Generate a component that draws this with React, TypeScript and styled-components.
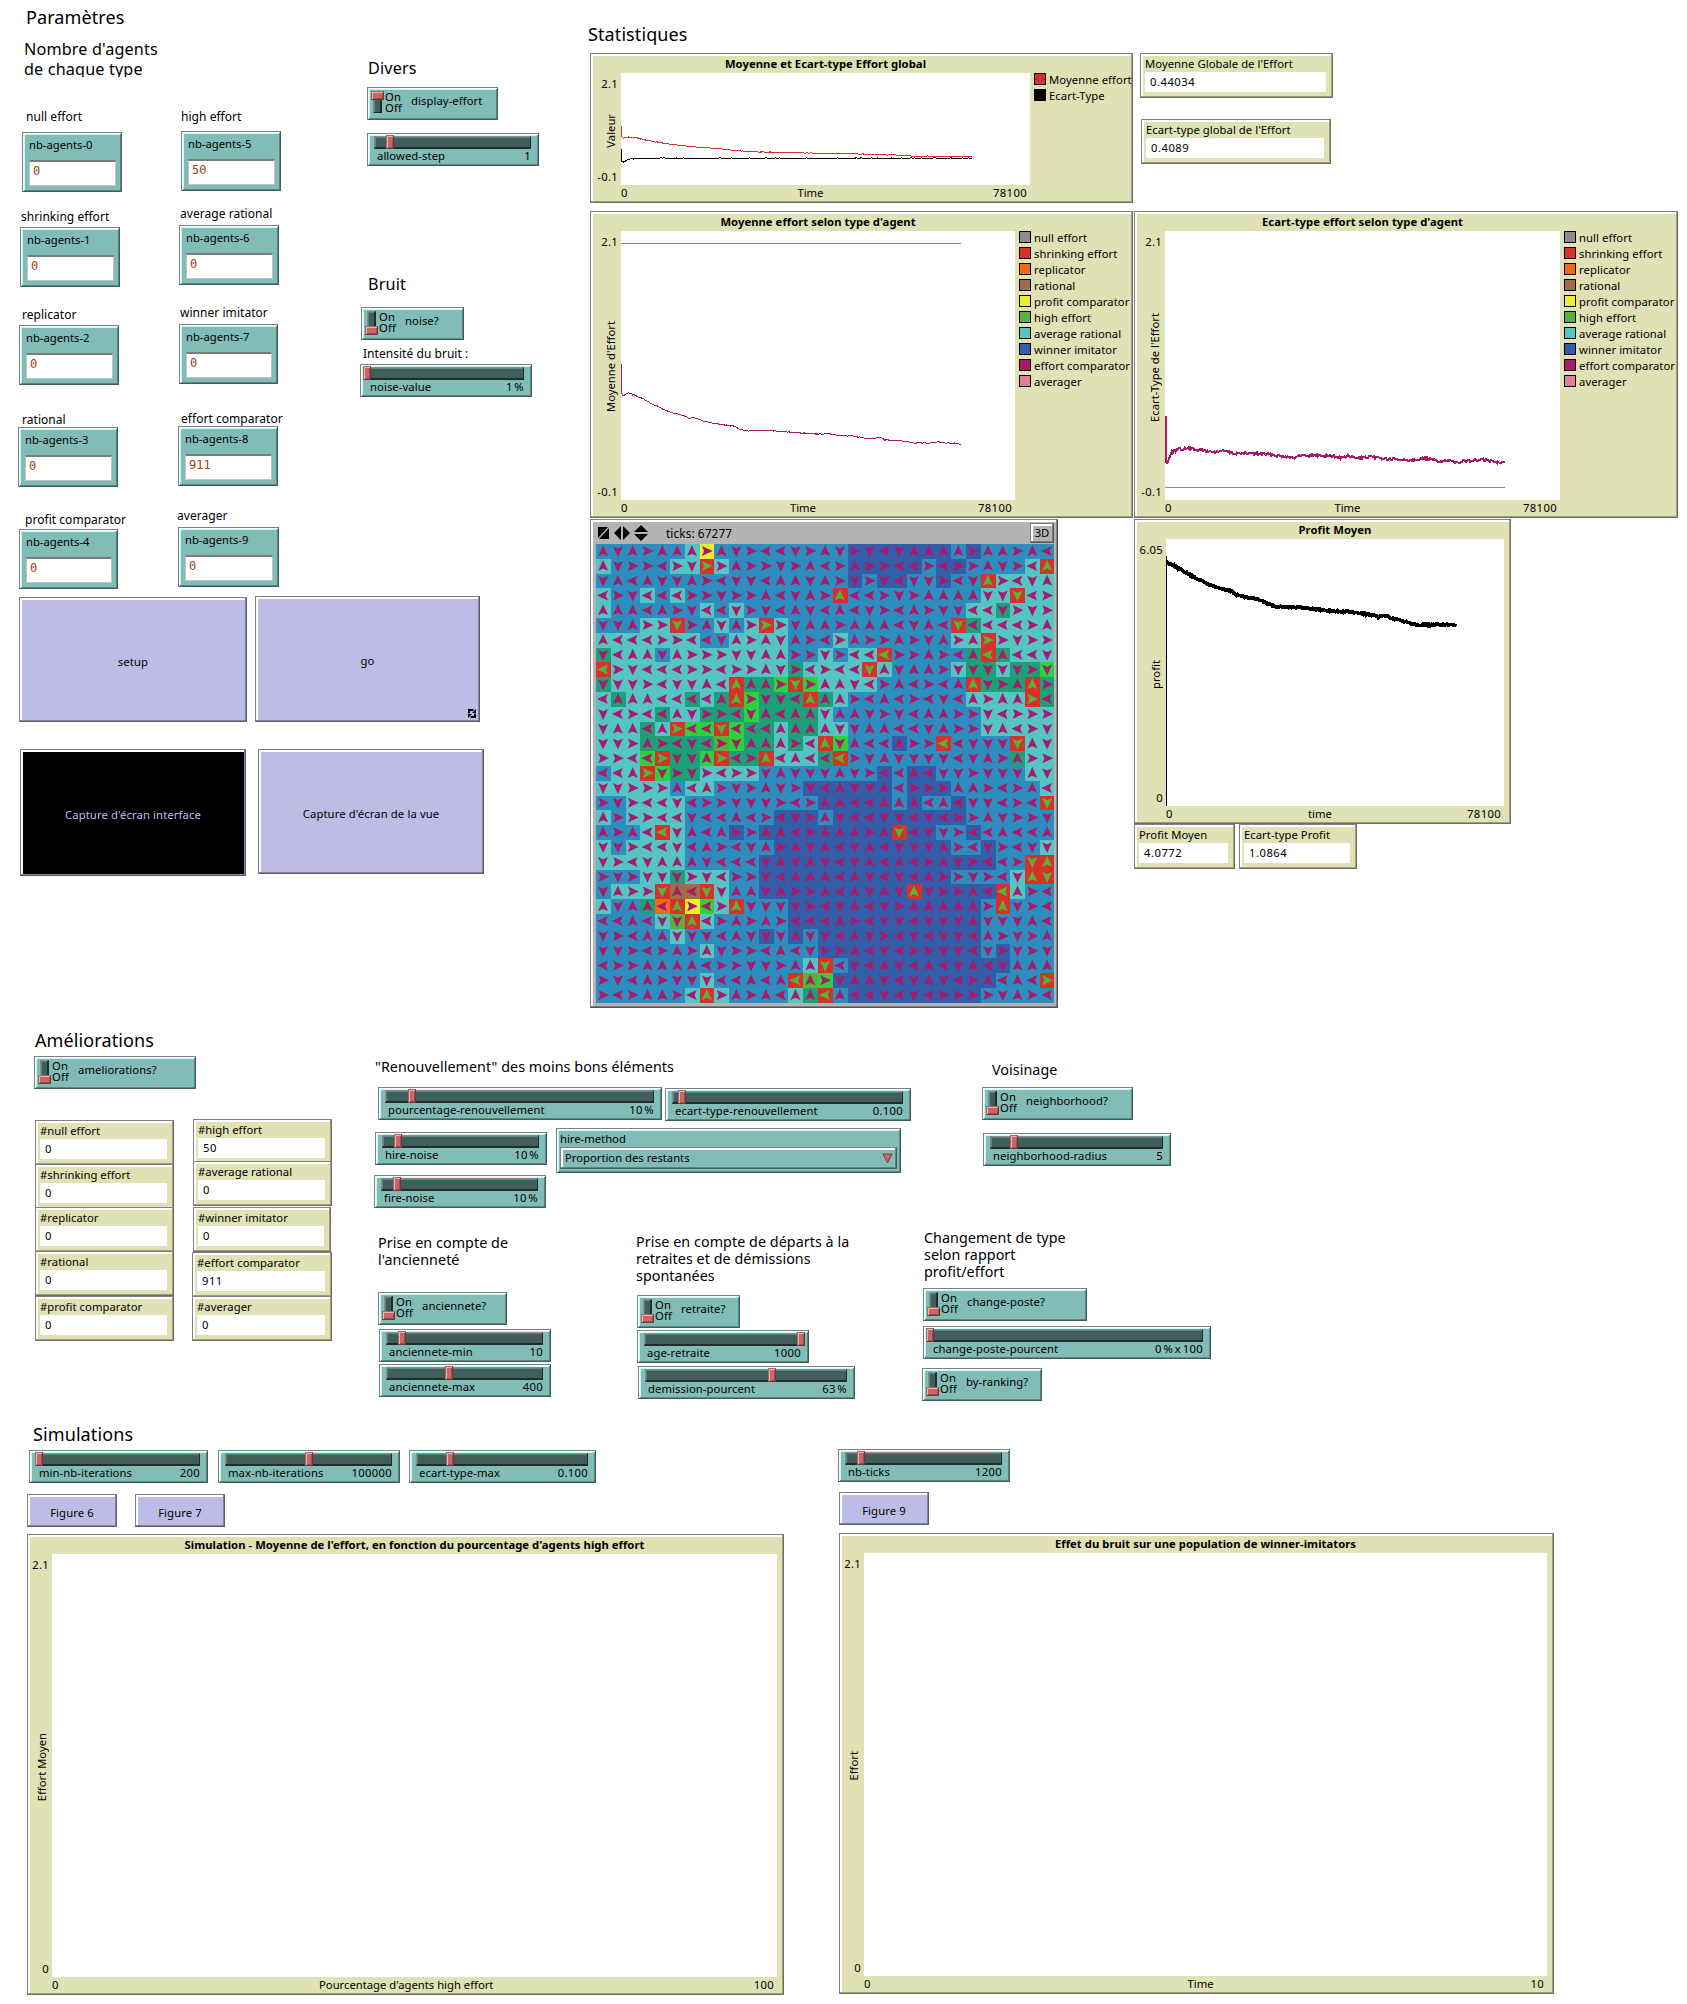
import React from 'react';
import styled, { createGlobalStyle, css } from 'styled-components';

const GlobalStyle = createGlobalStyle`
  * { box-sizing: border-box; }
  html, body { margin: 0; padding: 0; background: #fff; }
  body {
    font-family: "Noto Sans", "Open Sans", "Liberation Sans", sans-serif;
    font-size: 11.25px;
    line-height: 14px;
    color: #000;
  }
`;

/* ---------- palette ---------- */

const teal = '#82bcb6';
const tan = '#e0e1b5';
const lavender = '#bcbce6';

const agentTypes: [string, string][] = [
  ['null effort', '#8d8d8d'],
  ['shrinking effort', '#d73229'],
  ['replicator', '#f16a15'],
  ['rational', '#9d6e48'],
  ['profit comparator', '#eded31'],
  ['high effort', '#59b03c'],
  ['average rational', '#54c4c4'],
  ['winner imitator', '#345da9'],
  ['effort comparator', '#a71b6a'],
  ['averager', '#e07f96'],
];

/* ---------- layout ---------- */

const Page = styled.main`
  display: flex;
  flex-direction: column;
  width: 1687px;
  height: 2004px;
  overflow: hidden;
`;

const Section = styled.section`
  display: flex;
  align-items: flex-start;
`;

type Space = { $mt?: number; $ml?: number; $w?: number };
const space = css<Space>`
  margin-top: ${p => p.$mt ?? 0}px;
  margin-left: ${p => p.$ml ?? 0}px;
`;

const Column = styled.div<Space>`
  display: flex;
  flex-direction: column;
  align-items: flex-start;
  flex: none;
  width: ${p => (p.$w ? `${p.$w}px` : 'auto')};
  ${space}
`;

const Row = styled.div<Space & { $gap?: number }>`
  display: flex;
  align-items: flex-start;
  gap: ${p => p.$gap ?? 0}px;
  ${space}
`;

/* ---------- notes ---------- */

const Title = styled.h1<Space>`
  ${space}
  margin-bottom: 0;
  font-size: 18px;
  font-weight: 400;
  line-height: 24px;
  letter-spacing: 0.1px;
  white-space: nowrap;
`;

const Heading = styled.h2<Space & { $h?: number }>`
  ${space}
  margin-bottom: 0;
  height: ${p => p.$h ?? 20}px;
  overflow: hidden;
  font-size: 16.2px;
  font-weight: 400;
  line-height: 20px;
  letter-spacing: 0.15px;
  white-space: pre;
`;

const SubHeading = styled.h3<Space>`
  ${space}
  margin-bottom: 0;
  font-size: 14.3px;
  font-weight: 400;
  line-height: 17px;
  letter-spacing: 0.06px;
  white-space: pre;
`;

const Note = styled.p<Space>`
  ${space}
  margin-bottom: 0;
  padding-top: 1px;
  height: 16px;
  font-size: 12px;
  line-height: 16px;
  letter-spacing: 0.04px;
  white-space: nowrap;
`;

/* ---------- widget frames ---------- */

const Frame = styled.div<Space & { $h: number }>`
  ${space}
  flex: none;
  width: ${p => p.$w}px;
  height: ${p => p.$h}px;
  white-space: nowrap;
  border: 1px solid #808080;
`;

const TealFrame = styled(Frame)`
  background: ${teal};
  border-right-color: #415e5b;
  border-bottom-color: #415e5b;
  box-shadow: inset 1px 1px 0 #fff, inset -1px -1px 0 #5b847f, inset 2px 2px 0 #b9fffb;
`;

const TanFrame = styled(Frame)`
  background: ${tan};
  border-right-color: #70705a;
  border-bottom-color: #70705a;
  box-shadow: inset -1px -1px 0 #9d9e7f, inset 2px 2px 0 #fff;
`;

/* ---------- buttons ---------- */

const ButtonBox = styled.button<Space & { $h: number; $active?: boolean }>`
  ${space}
  position: relative;
  flex: none;
  display: flex;
  align-items: center;
  justify-content: center;
  width: ${p => p.$w}px;
  height: ${p => p.$h}px;
  padding: 4px 0 0;
  font: inherit;
  letter-spacing: 0.12px;
  color: ${p => (p.$active ? lavender : '#000')};
  background: ${p => (p.$active ? '#000' : lavender)};
  border: 1px solid #808080;
  border-right-color: #5e5e73;
  border-bottom-color: #5e5e73;
  box-shadow: inset -1px -1px 0 #8383a1, inset 2px 2px 0 #fff;
`;

const ForeverIcon = styled.svg`
  position: absolute;
  right: 3px;
  bottom: 3px;
`;

/* ---------- input ---------- */

const InputFrame = styled(TealFrame)`
  display: flex;
  flex-direction: column;
  padding: 5px 5px 5px 6px;
`;

const InputValue = styled.div`
  height: 26px;
  margin-top: 8px;
  padding: 2px 3px;
  font-family: "DejaVu Sans Mono", "Liberation Mono", monospace;
  font-size: 12px;
  line-height: 14px;
  color: #a0400f;
  background: #fff;
  border: 1px solid #c4c4c4;
  border-top: 2px solid #7b7b7b;
`;

function Input({ name, value, ...rest }: { name: string; value: string } & Space) {
  return (
    <InputFrame $w={100} $h={60} {...rest}>
      <span>{name}</span>
      <InputValue>{value}</InputValue>
    </InputFrame>
  );
}

/* ---------- switch ---------- */

const SwitchFrame = styled(TealFrame)`
  display: flex;
  padding: 3px 0 0 5px;
`;

const Slot = styled.div<{ $on?: boolean }>`
  display: flex;
  flex-direction: column;
  justify-content: ${p => (p.$on ? 'flex-start' : 'flex-end')};
  width: 9px;
  height: 22px;
  background: #425e5a;
  border: 1px solid #8b8b8b;
  border-right: 2px solid #1f2d2b;
  border-bottom: 1px solid #1f2d2b;
  box-shadow: inset 1px 1px 0 #5b847f;
`;

const SlotKnob = styled.div<{ $on?: boolean }>`
  width: 13px;
  height: 9px;
  flex: none;
  margin: ${p => (p.$on ? '-1px 0 0 -3px' : '0 0 -3px -3px')};
  background: #cc6566;
  border: 1px solid #8d7272;
  border-right-color: #713738;
  border-bottom-color: #713738;
  box-shadow: inset 1px 1px 0 #ffa9a9, inset -1px -1px 0 #9c4d4e;
`;

const OnOff = styled.div`
  display: flex;
  flex-direction: column;
  width: 26px;
  margin-left: 3px;
  line-height: 11px;
  letter-spacing: 0.15px;
`;

const SwitchName = styled.span`
  margin-top: 3px;
  letter-spacing: 0.08px;
`;

function Switch({ name, on, w, ...rest }: { name: string; on?: boolean; w: number } & Space) {
  return (
    <SwitchFrame $w={w} $h={33} {...rest}>
      <Slot $on={on}>
        <SlotKnob $on={on} />
      </Slot>
      <OnOff>
        <span>On</span>
        <span>Off</span>
      </OnOff>
      <SwitchName>{name}</SwitchName>
    </SwitchFrame>
  );
}

/* ---------- slider ---------- */

const SliderFrame = styled(TealFrame)`
  padding: 2px 7px 0 6px;
`;

const Track = styled.div`
  position: relative;
  height: 13px;
  background: #425e5a;
  border: 1px solid #8b8b8b;
  border-right-color: #1f2d2b;
  border-bottom: 2px solid #1f2d2b;
  box-shadow: inset 1px 1px 0 #5b847f;
`;

const TrackKnob = styled.div`
  position: absolute;
  top: -2px;
  width: 8px;
  height: 14px;
  background: #cc6566;
  border: 1px solid #8d7272;
  border-right-color: #713738;
  border-bottom-color: #713738;
  box-shadow: inset 1px 1px 0 #ffa9a9, inset -1px -1px 0 #9c4d4e;
`;

const SliderText = styled.div`
  display: flex;
  justify-content: space-between;
  padding-left: 3px;
  letter-spacing: 0.08px;
`;

const SliderValue = styled.span`
  letter-spacing: 0.3px;
  word-spacing: -1.5px;
`;

function Slider({
  name,
  value,
  at,
  w = 172,
  ...rest
}: { name: string; value: string; at: number; w?: number } & Space) {
  return (
    <SliderFrame $w={w} $h={33} {...rest}>
      <Track>
        <TrackKnob style={{ left: `calc((100% + 2px) * ${at} - 5px)` }} />
      </Track>
      <SliderText>
        <span>{name}</span>
        <SliderValue>{value}</SliderValue>
      </SliderText>
    </SliderFrame>
  );
}

/* ---------- monitor ---------- */

const MonitorFrame = styled(TanFrame)`
  display: flex;
  flex-direction: column;
  padding: 3px 6px 5px 4px;
  letter-spacing: 0.05px;
`;

const MonitorValue = styled.div`
  height: 20px;
  margin-top: 1px;
  padding-left: 5px;
  line-height: 20px;
  letter-spacing: 0.5px;
  background: #fff;
`;

function Monitor({ name, value, w, ...rest }: { name: string; value: string; w: number } & Space) {
  return (
    <MonitorFrame $w={w} $h={45} {...rest}>
      <span>{name}</span>
      <MonitorValue>{value}</MonitorValue>
    </MonitorFrame>
  );
}

/* ---------- chooser ---------- */

const ChooserFrame = styled(TealFrame)`
  padding: 3px 3px 0;
`;

const ChooserValue = styled.div`
  display: flex;
  align-items: center;
  justify-content: space-between;
  height: 22px;
  margin-top: 1px;
  padding: 0 3px 0 4px;
  border: 1px solid #808080;
  border-right-color: #415e5b;
  border-bottom-color: #415e5b;
  box-shadow: inset -1px -1px 0 #5b847f, inset 2px 2px 0 #fff;
`;

/* ---------- plot ---------- */

const PlotFrame = styled(TanFrame)<{ $left: number; $right: number }>`
  display: grid;
  grid-template-columns: ${p => p.$left}px 1fr ${p => p.$right}px;
  grid-template-rows: 19px 1fr 17px;
`;

const PlotTitle = styled.div`
  grid-column: 2;
  grid-row: 1;
  display: flex;
  justify-content: center;
  padding-top: 3px;
  font-weight: 700;
  letter-spacing: 0.05px;
`;

const YAxis = styled.div`
  grid-column: 1;
  grid-row: 2;
  display: flex;
  flex-direction: column;
  align-items: flex-end;
  justify-content: space-between;
  padding: 4px 3px 1px 0;
  letter-spacing: 0.3px;
`;

const YLabel = styled.span`
  writing-mode: vertical-rl;
  transform: rotate(180deg);
  width: 14px;
  letter-spacing: 0;
`;

const Canvas = styled.svg`
  grid-column: 2;
  grid-row: 2;
  display: block;
  width: 100%;
  height: 100%;
  background: #fff;
`;

const XAxis = styled.div`
  grid-column: 2;
  grid-row: 3;
  display: flex;
  justify-content: space-between;
  padding: 0 3px 0 0;
  line-height: 16px;
`;

const AxisBound = styled.span`
  letter-spacing: 0.35px;
`;

const Legend = styled.ul`
  grid-column: 3;
  grid-row: 2;
  margin: 0;
  padding: 0 0 0 4px;
  list-style: none;
  min-width: 0;
  letter-spacing: 0.08px;
`;

const LegendItem = styled.li`
  display: flex;
  height: 16px;
  gap: 3px;
`;

const Swatch = styled.span<{ $color: string }>`
  flex: none;
  width: 12px;
  height: 12px;
  background: ${p => p.$color};
  border: 1px solid #000;
`;

type PlotProps = {
  w: number;
  h: number;
  left?: number;
  right?: number;
  title: string;
  y: [string, string, string];
  x: [string, string, string];
  legend?: [string, string][];
  children?: React.ReactNode;
} & Space;

function Plot({ w, h, left = 30, right = 6, title, y, x, legend, children, ...rest }: PlotProps) {
  return (
    <PlotFrame $w={w} $h={h} $left={left} $right={right} {...rest}>
      <PlotTitle>{title}</PlotTitle>
      <YAxis>
        <span>{y[0]}</span>
        <YLabel>{y[1]}</YLabel>
        <span>{y[2]}</span>
      </YAxis>
      <Canvas>{children}</Canvas>
      <XAxis>
        <AxisBound>{x[0]}</AxisBound>
        <span>{x[1]}</span>
        <AxisBound>{x[2]}</AxisBound>
      </XAxis>
      {legend && (
        <Legend>
          {legend.map(([name, color]) => (
            <LegendItem key={name}>
              <Swatch $color={color} />
              <span>{name}</span>
            </LegendItem>
          ))}
        </Legend>
      )}
    </PlotFrame>
  );
}

/* Builds a jittered pen trace through the given points, one sample per pixel. */
function trace(points: [number, number][], jitter: number, seed = 7): string {
  let s = seed;
  const next = () => {
    s = (s * 1103515245 + 12345) % 2147483648;
    return s / 2147483648 - 0.5;
  };
  const out: string[] = [];
  for (let i = 0; i < points.length - 1; i++) {
    const [x0, y0] = points[i];
    const [x1, y1] = points[i + 1];
    const n = Math.max(1, Math.round(x1 - x0));
    for (let k = 0; k < n; k++) {
      const t = k / n;
      out.push(`${(x0 + (x1 - x0) * t).toFixed(1)},${(y0 + (y1 - y0) * t + next() * jitter).toFixed(1)}`);
    }
  }
  const last = points[points.length - 1];
  out.push(`${last[0]},${last[1]}`);
  return out.join(' ');
}

const Pen = styled.polyline<{ $color: string; $width?: number }>`
  fill: none;
  stroke: ${p => p.$color};
  stroke-width: ${p => p.$width ?? 1}px;
  shape-rendering: crispEdges;
`;

const globalMean: [number, number][] = [
  [0.5, 53], [0.6, 64], [2, 65], [7, 64], [16, 65], [27, 67.5], [38, 69.5], [52, 71.5], [66, 73.2], [84, 74.8],
  [102, 76.2], [116, 77.3], [134, 79], [173, 79.3], [191, 80.2], [230, 80.6], [255, 81.6], [273, 82], [291, 83.2], [351, 83.5],
];
const globalDeviation: [number, number][] = [
  [0.5, 75.4], [0.6, 88], [2, 89.5], [5, 87.5], [9, 86], [23, 85.3], [351, 85.3],
];
const meanByType: [number, number][] = [
  [0.5, 133], [0.6, 162], [2, 164.7], [7, 161.7], [12.5, 163.7], [18, 166.3], [23, 168.3], [30, 172.3], [37.5, 175.7],
  [43, 178.7], [52, 182], [61, 184.3], [68, 187], [73, 186.3], [79, 189], [87.5, 191.3], [96, 193], [105, 194],
  [114, 195.3], [118, 197.7], [125, 199.7], [137, 199.3], [155, 200], [173, 201.3], [187, 202.7], [200, 203.3],
  [207, 202.7], [214, 204], [230, 205], [248, 207.3], [261, 206.7], [264, 209], [280, 210], [291, 211.7],
  [309, 212], [318, 211], [327, 212.3], [334, 212], [340, 213.3],
];
const deviationByType: [number, number][] = [
  [0.5, 185], [0.6, 229], [1.5, 231.7], [3.3, 229], [5.8, 222.3], [9.4, 219.7], [14.8, 218.3], [24, 217.3], [35, 219],
  [49, 221], [60, 219.7], [67, 222.3], [82, 222.3], [100, 223], [114, 224.7], [130.5, 226.7], [136, 224.3],
  [165, 224.7], [177.5, 227], [183, 225], [190, 227], [208, 226.3], [223, 228], [244, 229], [261, 227.3],
  [270, 229.7], [291, 230.7], [313, 229.3], [320, 228.7], [331, 231.3], [340, 230.7],
];
const profitMean: [number, number][] = [
  [0.5, 23.3], [4, 24.7], [9, 27], [14, 30.3], [20.7, 34], [27.3, 37.7], [34, 41], [40.7, 44.3], [49, 47.7], [59, 51],
  [65.7, 52.3], [70.7, 55.7], [79, 58.3], [89, 59.7], [97.3, 62.3], [102.3, 65], [110.7, 67.7], [127.3, 68],
  [140.7, 69.3], [154, 70.7], [167.3, 72.3], [184, 73], [200.7, 75.3], [212.3, 78], [219, 76.3], [225.7, 79.7],
  [237.3, 82], [249, 85.3], [264, 86.3], [274, 85.3], [284, 86], [290.5, 86.7],
];

/* ---------- world view ---------- */

const ViewFrame = styled(Frame)`
  display: flex;
  flex-direction: column;
  padding: 2px 3px 4px 5px;
  background: #b4b4b4;
  border-right-color: #555;
  border-bottom-color: #555;
  box-shadow: inset -1px -1px 0 #7d7d7d, inset 2px 2px 0 #fff;
`;

const ViewBar = styled.div`
  display: flex;
  flex: none;
  align-items: center;
  height: 22px;
  padding-left: 2px;
  gap: 4px;
`;

const Ticks = styled.span`
  margin-left: 14px;
  font-size: 11.8px;
  letter-spacing: 0.1px;
`;

const ViewButton = styled.button`
  width: 24px;
  height: 20px;
  margin-left: auto;
  padding: 0;
  font: inherit;
  color: #000;
  background: #b4b4b4;
  border: 1px solid #808080;
  border-right-color: #555;
  border-bottom-color: #555;
  box-shadow: inset -1px -1px 0 #7d7d7d, inset 2px 2px 0 #fff;
`;

const World = styled.svg`
  display: block;
  flex: none;
`;

const patchColors: Record<string, string> = {
  B: '#2d8dbe',
  D: '#345da9',
  C: '#54c4c4',
  T: '#1d9f78',
  R: '#d73229',
  L: '#2cd13b',
  G: '#59b03c',
  Y: '#eded31',
  O: '#f16a15',
  N: '#9d6e48',
};

const patches = [
  'BBBBBBCYBBBBBBBBBDDDDDDDBDBBBBB',
  'CBBBBCCRCBBBBBBBBDDDDDBDDBBBBCR',
  'BBBBBBBBBBBBBBBBBDBDDBBDBBRCCCC',
  'CBBCBCBBBBBBBBBBRBBBBBBBBBCCRCC',
  'CBBBBBBCBCBBBBBBBBBBBBBBBCCTCCC',
  'BBBCCRBBCBCRCBBBBBBBBBBBRTCCCCC',
  'CCCCCCCBBCCCCBBBCBBBBBBBCCRCCCC',
  'TCCCBCCCCCCCCBBCBCCRBBBBBTRTCCC',
  'RCCCCCCCCCCCCTCCCCRCBBBBCTTCTTL',
  'TCCCCCCCCRTTLRLCCCCBBBBBBRTTTRT',
  'CTCCCCTCTRLTTTRTCBBBBBBBBCCCCRT',
  'CCCCTCCTTTLTTTTCBBBBBBBBBBCCCCC',
  'CCCTCRLLRLTTCTTCCBBBBBBBBBCCCCC',
  'CCCTTTTTGLTTCTCRLBBBDBBRBBBBRCC',
  'CCCLRTTLRTTRCCCTRBBBBBBBBBBBTCC',
  'BCCRLTTCCCCBBBBBBBBDBDDBBBBBBCC',
  'CCCCCBCCBBBBBBDDDDDDBDDDBBBBBBC',
  'BBCCCCBBBBBBBBBDDDDDBDBBDBBBBBR',
  'CBCCCCBBBBBBDDDBDDDDDDDDDBBBBBB',
  'BBBCRCBBBDBDDDDDDDDDRDDBBDBBBBB',
  'CBCCCCBBBBBBDDDDDDDDDDDDBBDBBBC',
  'CCCCCCBBBBBDDDDDDDDDDDDDDDDBBRR',
  'BBBCCTCCCBBDDDDDDDDDDDDDBBBBCRR',
  'BCCCRNNRCBBDDDDDDDDDDRDDDDDRCBB',
  'CBBTORYLCRBBBDDDDDDDDDDDDDBRBBB',
  'BBBBCGRCBBBBBDDDDDDDDDDDDDBBBBB',
  'BBBBBCBBBBBDBDBDDDDDDDDDDDBBBBB',
  'BBBBBBBCBBBBBBBDDDDDDDDDDDBDBBB',
  'BBBBBBBBBBBBBBCRBDDDDDDDDDDDBBB',
  'BBBBBBBCBBBBBRGLDDDDDDDDDDDBBBR',
  'BBBBBBCRCBBBBCTRBDDDDDDDDDBBBBB',
];

const headings = [
  'UDURUUURUDRLLDRUDRDLDUUUURUURUL',
  'UDRRLRDRRURRDRULRURRLLRLRRUDRLU',
  'DULUDDURLDDLUUDURDRDLDDRLDURLDU',
  'LRDLLLRRDRRULDURULLRDRUUUUDDDLR',
  'UUULURDLLDRDLUDLULDRLURDDLLDRDR',
  'DDURRDRUDURRRDUURUUULDULDLLLLRU',
  'ULLLRRLLDURUDURLRURRURDURURRDRR',
  'DLUUDURRRDDUURRDRLLLRRURLULULLD',
  'LRDLLLRRLRRUDRLRLLDUDUURDDDDDRD',
  'DDDRLDDULUUURDRUUDLRULRLUUDRUUR',
  'LUUULLLLUURDDLUUURLULRLDLURUURL',
  'DLRLLUDRRLDULUUDUUDRDLUURRDLRRR',
  'DUULURLLDLLLUUUUDDUULLDURRDULRD',
  'DDRURLDLRDUUURLUDULLURRLLDDDDUD',
  'RRLLRDDURLRULULLLRDUDDDDLDURURR',
  'LLURDRDRLRRDUDDDUDRLLULDDRDDDUD',
  'DDRRRULURDRUDRDLUDDULRRRUURLRUL',
  'RDRLLDLRRDDDRLRUULLUUULULDDLRLD',
  'URRRLLDLLULRLDRUDLLDDLDLRRUDRRD',
  'URULLDULURRUULRUUURUDLDDRLLULLU',
  'DDRLLDLURLDURUDULDULDDDURLDRLDD',
  'DRLDUUUDLLLDUDUDLDULULRUDRLLRDU',
  'RDRDDDRDLRRDLUUULUDLDLURRDRLDUD',
  'DURRDULDDUUDURRULUDUDUDRRULLURL',
  'UDUULURLRUDDDDRLDULDRUUUUURUDRL',
  'LLULDDULRURURLLLURLDDLDDDUDDDUL',
  'DRLUUDDDLUDDDUDDLUDRLDLDDLURDRU',
  'DDRLRURUDRRLULDRRULDLRRDDLDRDRD',
  'LRRUUUULRRDDRUUDLDLUDLULDULDUUU',
  'RDLURDDDLLULULURDUUDLDUDLRULULR',
  'RLRUURLURURULUULULLDLDLRRRRDURL',
];

const angle: Record<string, number> = { U: 0, R: 90, D: 180, L: 270 };
const CELL = 14.8;

function WorldView() {
  return (
    <World width={458} height={459} viewBox="0 0 458 459">
      <g shapeRendering="crispEdges">
        {patches.map((row, r) =>
          row.split('').map((c, i) => {
            const x = Math.round(i * CELL);
            const y = Math.round(r * CELL);
            return (
              <rect
                key={`${r}-${i}`}
                x={x}
                y={y}
                width={Math.round((i + 1) * CELL) - x}
                height={Math.round((r + 1) * CELL) - y}
                fill={patchColors[c]}
              />
            );
          }),
        )}
      </g>
      {headings.map((row, r) =>
        row.split('').map((d, i) => (
          <path
            key={`${r}-${i}`}
            d="M0 -6L-5 4.8L0 2.7L5 4.8Z"
            fill={patches[r][i] === 'R' ? '#59b03c' : '#a71b6a'}
            transform={`translate(${i * CELL + 7.1} ${r * CELL + 7.1}) rotate(${angle[d]})`}
          />
        )),
      )}
    </World>
  );
}

/* ---------- page ---------- */

export default function App() {
  return (
    <>
      <GlobalStyle />
      <Page>
        <Section>
          <Column $w={588}>
            <Title $mt={5} $ml={26}>Paramètres</Title>
            <Row $mt={10}>
              <Column $ml={18} $w={159}>
                <Heading $h={38} $ml={6}>{"Nombre d'agents\nde chaque type"}</Heading>
                <Note $mt={31} $ml={8}>null effort</Note>
                <Input $mt={8} $ml={4} name="nb-agents-0" value="0" />
                <Note $mt={16} $ml={3}>shrinking effort</Note>
                <Input $mt={3} $ml={2} name="nb-agents-1" value="0" />
                <Note $mt={19} $ml={4}>replicator</Note>
                <Input $mt={3} $ml={1} name="nb-agents-2" value="0" />
                <Note $mt={26} $ml={4}>rational</Note>
                <Input name="nb-agents-3" value="0" />
                <Note $mt={24} $ml={7}>profit comparator</Note>
                <Input $mt={2} $ml={1} $w={99} name="nb-agents-4" value="0" />
              </Column>
              <Column $w={183}>
                <Note $mt={69} $ml={4}>high effort</Note>
                <Input $mt={7} $ml={4} name="nb-agents-5" value="50" />
                <Note $mt={14} $ml={3}>average rational</Note>
                <Input $mt={4} $ml={2} name="nb-agents-6" value="0" />
                <Note $mt={19} $ml={3}>winner imitator</Note>
                <Input $mt={4} $ml={2} $w={99} name="nb-agents-7" value="0" />
                <Note $mt={26} $ml={4}>effort comparator</Note>
                <Input $ml={1} name="nb-agents-8" value="911" />
                <Note $mt={21}>averager</Note>
                <Input $mt={4} $ml={1} $w={101} name="nb-agents-9" value="0" />
              </Column>
              <Column>
                <Heading $mt={19} $ml={8}>Divers</Heading>
                <Switch $mt={9} $ml={7} w={131} name="display-effort" on />
                <Slider $mt={13} $ml={7} name="allowed-step" value="1" at={0.1} />
                <Heading $mt={108} $ml={8}>Bruit</Heading>
                <Switch $mt={13} $ml={1} w={103} name="noise?" />
                <Note $mt={5} $ml={3}>Intensité du bruit :</Note>
                <Slider $mt={3} name="noise-value" value="1 %" at={0} />
              </Column>
            </Row>
            <Row $mt={7} $ml={19} $gap={8}>
              <ButtonBox $mt={1} $w={228} $h={125}>setup</ButtonBox>
              <ButtonBox $w={225} $h={126}>
                go
                <ForeverIcon width="8" height="9" viewBox="0 0 8 9" fill="none" stroke="#000" strokeWidth="2">
                  <path d="M1 4.5V1H5.4" />
                  <path d="M7 4.5V8H2.6" />
                  <path d="M4 4H8V0Z M4 5H0V9Z" fill="#000" stroke="none" />
                </ForeverIcon>
              </ButtonBox>
            </Row>
            <Row $mt={27} $ml={20} $gap={12}>
              <ButtonBox $active $w={226} $h={127}>Capture d'écran interface</ButtonBox>
              <ButtonBox $w={226} $h={125}>Capture d'écran de la vue</ButtonBox>
            </Row>
          </Column>

          <Column>
            <Title $mt={22}>Statistiques</Title>
            <Row $mt={7} $ml={2} $gap={7}>
              <Plot
                w={543}
                h={150}
                right={102}
                title="Moyenne et Ecart-type Effort global"
                y={['2.1', 'Valeur', '-0.1']}
                x={['0', 'Time', '78100']}
                legend={[['Moyenne effort', '#d73229'], ['Ecart-Type', '#000']]}
              >
                <Pen $color="#d73229" points={trace(globalMean, 0.7)} />
                <Pen $color="#000" points={trace(globalDeviation, 1, 31)} />
              </Plot>
              <Column>
                <Monitor w={193} name="Moyenne Globale de l'Effort" value="0.44034" />
                <Monitor $mt={21} $ml={1} w={190} name="Ecart-type global de l'Effort" value="0.4089" />
              </Column>
            </Row>
            <Row $mt={8} $ml={2} $gap={1}>
              <Plot
                w={543}
                h={307}
                right={117}
                title="Moyenne effort selon type d'agent"
                y={['2.1', "Moyenne d'Effort", '-0.1']}
                x={['0', 'Time', '78100']}
                legend={agentTypes}
              >
                <Pen $color="#59b03c" points="0,12.5 340,12.5" />
                <Pen $color="#a71b6a" points={trace(meanByType, 1)} />
              </Plot>
              <Plot
                w={544}
                h={307}
                right={117}
                title="Ecart-type effort selon type d'agent"
                y={['2.1', "Ecart-Type de l'Effort", '-0.1']}
                x={['0', 'Time', '78100']}
                legend={agentTypes}
              >
                <Pen $color="#59b03c" points="0,256.5 340,256.5" />
                <Pen $color="#a71b6a" $width={2} points={trace(deviationByType, 2.6)} />
              </Plot>
            </Row>
            <Row $mt={1} $ml={2} $gap={76}>
              <ViewFrame $w={468} $h={489}>
                <ViewBar>
                  <svg width="12" height="12" viewBox="0 0 12 12">
                    <path d="M0 0H11V12H0Z" />
                    <path d="M0 12L11 0" stroke="#b4b4b4" strokeWidth="1.5" />
                  </svg>
                  <svg width="16" height="14" viewBox="0 0 16 14">
                    <path d="M7 0V14L0 7ZM9 0V14L16 7Z" />
                  </svg>
                  <svg width="14" height="16" viewBox="0 0 14 16">
                    <path d="M0 7H14L7 0ZM0 9H14L7 16Z" />
                  </svg>
                  <Ticks>ticks: 67277</Ticks>
                  <ViewButton>3D</ViewButton>
                </ViewBar>
                <WorldView />
              </ViewFrame>
              <Column>
                <Plot
                  w={377}
                  h={305}
                  left={31}
                  title="Profit Moyen"
                  y={['6.05', 'profit', '0']}
                  x={['0', 'time', '78100']}
                >
                  <Pen $color="#000" points="0.5,17 0.5,267" />
                  <Pen $color="#000" $width={3.6} points={trace(profitMean, 1.6)} />
                </Plot>
                <Row $gap={4}>
                  <Monitor w={101} name="Profit Moyen" value="4.0772" />
                  <Monitor w={118} name="Ecart-type Profit" value="1.0864" />
                </Row>
              </Column>
            </Row>
          </Column>
        </Section>

        <Section>
          <Column $ml={34} $w={340}>
            <Title $mt={20} $ml={1}>Améliorations</Title>
            <Switch $mt={4} w={162} name="ameliorations?" />
            <Row $mt={30} $ml={1} $gap={18}>
              <Column $mt={1}>
                <Monitor w={139} name="#null effort" value="0" />
                <Monitor $mt={-1} w={139} name="#shrinking effort" value="0" />
                <Monitor $mt={-2} w={139} name="#replicator" value="0" />
                <Monitor $mt={-1} w={139} name="#rational" value="0" />
                <Monitor w={139} name="#profit comparator" value="0" />
              </Column>
              <Column>
                <Monitor $ml={1} w={139} name="#high effort" value="50" />
                <Monitor $mt={-3} $ml={1} w={139} name="#average rational" value="0" />
                <Monitor $mt={1} $ml={1} w={138} name="#winner imitator" value="0" />
                <Monitor w={140} name="#effort comparator" value="911" />
                <Monitor $mt={-1} w={140} name="#averager" value="0" />
              </Column>
            </Row>
          </Column>

          <Column $w={548}>
            <SubHeading $mt={50} $ml={1}>"Renouvellement" des moins bons éléments</SubHeading>
            <Row $mt={12} $ml={4} $gap={3}>
              <Slider w={284} name="pourcentage-renouvellement" value="10 %" at={0.1} />
              <Slider $mt={1} w={246} name="ecart-type-renouvellement" value="0.100" at={0.045} />
            </Row>
            <Row $mt={7} $gap={9}>
              <Column>
                <Slider $mt={4} $ml={1} name="hire-noise" value="10 %" at={0.1} />
                <Slider $mt={10} name="fire-noise" value="10 %" at={0.1} />
              </Column>
              <ChooserFrame $w={345} $h={45}>
                hire-method
                <ChooserValue>
                  <span>Proportion des restants</span>
                  <svg width="11" height="11" viewBox="0 0 11 11">
                    <path d="M1 1H10L5.5 10Z" fill="#cc6566" stroke="#713738" strokeWidth="0.9" />
                  </svg>
                </ChooserValue>
              </ChooserFrame>
            </Row>
            <Row $mt={25} $ml={4}>
              <Column $mt={1} $w={258}>
                <SubHeading>{"Prise en compte de\nl'ancienneté"}</SubHeading>
                <Switch $mt={24} w={129} name="anciennete?" />
                <Slider $mt={4} $ml={1} name="anciennete-min" value="10" at={0.1} />
                <Slider $mt={2} $ml={1} name="anciennete-max" value="400" at={0.4} />
              </Column>
              <Column>
                <SubHeading>{'Prise en compte de départs à la\nretraites et de démissions\nspontanées'}</SubHeading>
                <Switch $mt={11} $ml={1} w={103} name="retraite?" />
                <Slider $mt={2} $ml={1} name="age-retraite" value="1000" at={1} />
                <Slider $mt={3} $ml={2} w={217} name="demission-pourcent" value="63 %" at={0.63} />
              </Column>
            </Row>
          </Column>

          <Column>
            <SubHeading $mt={53} $ml={70}>Voisinage</SubHeading>
            <Switch $mt={9} $ml={60} w={151} name="neighborhood?" />
            <Slider $mt={13} $ml={61} w={188} name="neighborhood-radius" value="5" at={0.14} />
            <SubHeading $mt={63} $ml={2}>{'Changement de type\nselon rapport\nprofit/effort'}</SubHeading>
            <Switch $mt={8} $ml={1} w={164} name="change-poste?" />
            <Slider $mt={5} $ml={1} w={288} name="change-poste-pourcent" value="0 % x 100" at={0} />
            <Switch $mt={9} w={120} name="by-ranking?" />
          </Column>
        </Section>

        <Section>
          <Column $ml={27} $w={811}>
            <Title $mt={21} $ml={6}>Simulations</Title>
            <Row $mt={4} $ml={2}>
              <Slider w={179} name="min-nb-iterations" value="200" at={0.02} />
              <Slider $ml={10} w={182} name="max-nb-iterations" value="100000" at={0.5} />
              <Slider $ml={9} w={187} name="ecart-type-max" value="0.100" at={0.2} />
            </Row>
            <Row $mt={11} $gap={18}>
              <ButtonBox $w={90} $h={33}>Figure 6</ButtonBox>
              <ButtonBox $w={90} $h={33}>Figure 7</ButtonBox>
            </Row>
            <Plot
              $mt={7}
              w={757}
              h={461}
              left={24}
              title="Simulation - Moyenne de l'effort, en fonction du pourcentage d'agents high effort"
              y={['2.1', 'Effort Moyen', '0']}
              x={['0', "Pourcentage d'agents high effort", '100']}
            />
          </Column>
          <Column>
            <Slider $mt={48} name="nb-ticks" value="1200" at={0.1} />
            <ButtonBox $mt={10} $ml={1} $w={90} $h={33}>Figure 9</ButtonBox>
            <Plot
              $mt={8}
              $ml={1}
              w={715}
              h={461}
              left={24}
              title="Effet du bruit sur une population de winner-imitators"
              y={['2.1', 'Effort', '0']}
              x={['0', 'Time', '10']}
            />
          </Column>
        </Section>
      </Page>
    </>
  );
}
